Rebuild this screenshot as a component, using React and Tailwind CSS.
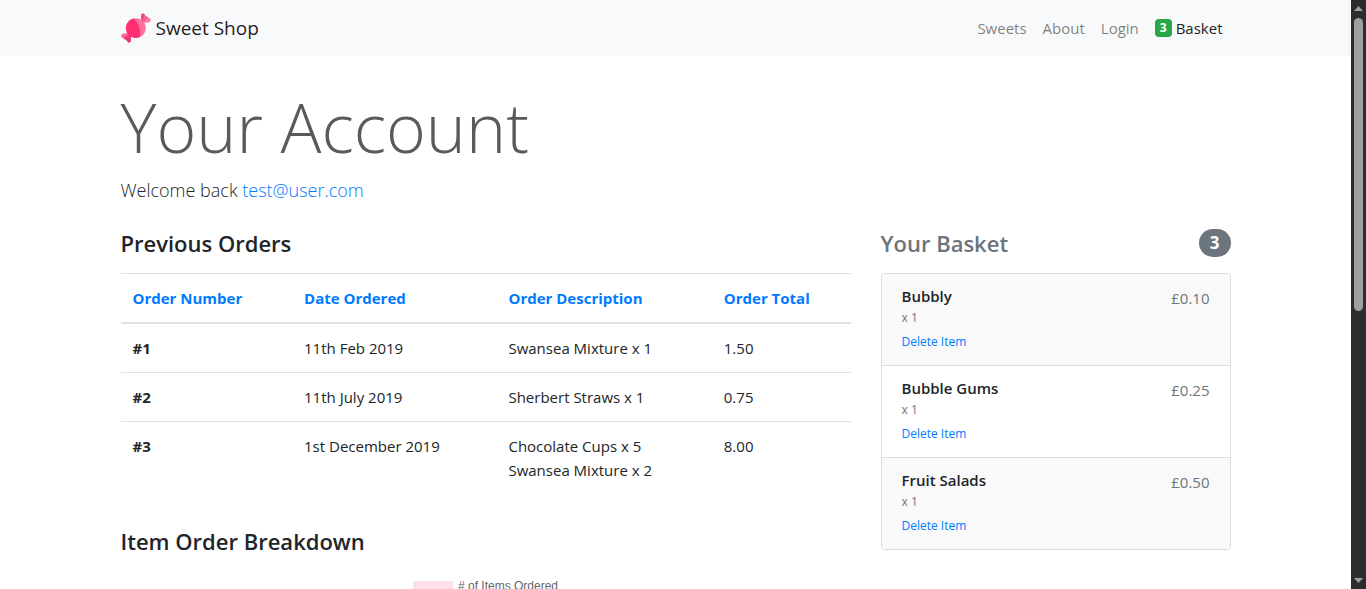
import React from "react";

const orders = [
  { id: "#1", date: "11th Feb 2019", items: ["Swansea Mixture x 1"], total: "1.50" },
  { id: "#2", date: "11th July 2019", items: ["Sherbert Straws x 1"], total: "0.75" },
  { id: "#3", date: "1st December 2019", items: ["Chocolate Cups x 5", "Swansea Mixture x 2"], total: "8.00" },
];

const basket = [
  { name: "Bubbly", price: "£0.10" },
  { name: "Bubble Gums", price: "£0.25" },
  { name: "Fruit Salads", price: "£0.50" },
];

function CandyLogo() {
  return (
    <svg className="size-[30px]" viewBox="0 0 30 30" aria-hidden="true">
      <path d="M20 10.4 L20.2 1.8 Q21.2 -0.4 23 0.8 Q24.2 3 26 3.8 Q29 4.8 29.8 6.6 Q30 8.8 28.2 9.2 Z" fill="#ff7aa2" />
      <path d="M20 10.4 L20.2 1.8 Q21.2 -0.4 23 0.8 L24 3 Z" fill="#f0467c" />
      <path d="M20 10.4 L24.8 3.2 L27.2 4.4 Z" fill="#f4598a" />
      <path d="M10 19.6 L9.8 28.2 Q8.8 30.4 7 29.2 Q5.8 27 4 26.2 Q1 25.2 0.2 23.4 Q0 21.2 1.8 20.8 Z" fill="#ff6594" />
      <path d="M10 19.6 L9.8 28.2 Q8.8 30.4 7 29.2 Q6 27.4 4.8 26.6 Z" fill="#e63a72" />
      <path d="M10 19.6 L5.2 26.8 L2.8 25.6 Z" fill="#f4346f" />
      <circle cx="15" cy="15" r="9.8" fill="#ff6f9b" />
      <path d="M12.8 5.5 A9.8 9.8 0 1 0 19 23.9 Q20.5 13.5 12.8 5.5 Z" fill="#ff3072" />
    </svg>
  );
}

function Navbar() {
  return (
    <nav className="bg-[#f8f9fa]">
      <div className="mx-auto flex h-14 max-w-[1140px] items-center justify-between px-[15px]">
        <a href="#home" className="flex items-center gap-[5px] text-[19px] leading-[30px] text-black/90">
          <CandyLogo />
          Sweet Shop
        </a>
        <ul className="flex gap-4 px-2 text-[15px] leading-6 text-black/50">
          <li><a href="#sweets">Sweets</a></li>
          <li><a href="#about">About</a></li>
          <li><a href="#login">Login</a></li>
          <li>
            <a href="#basket" className="flex items-center gap-1 text-black/90">
              <span className="rounded bg-[#28a745] px-[5px] py-[3px] text-xs leading-3 font-bold text-white">3</span>
              Basket
            </a>
          </li>
        </ul>
      </div>
    </nav>
  );
}

function OrdersTable() {
  return (
    <table className="w-full table-fixed border-collapse text-left text-[15px] leading-6">
      <colgroup>
        <col className="w-[23.5%]" />
        <col className="w-[28%]" />
        <col className="w-[29.5%]" />
        <col className="w-[19%]" />
      </colgroup>
      <thead>
        <tr className="border-t border-b-2 border-[#dee2e6] text-[#007bff]">
          {["Order Number", "Date Ordered", "Order Description", "Order Total"].map((label) => (
            <th key={label} scope="col" className="p-3 font-bold">
              <a href="#sort">{label}</a>
            </th>
          ))}
        </tr>
      </thead>
      <tbody>
        {orders.map((order) => (
          <tr key={order.id} className="border-t border-[#dee2e6] align-top">
            <th scope="row" className="p-3 font-bold">{order.id}</th>
            <td className="p-3">{order.date}</td>
            <td className="p-3">
              {order.items.map((item) => <div key={item}>{item}</div>)}
            </td>
            <td className="p-3">{order.total}</td>
          </tr>
        ))}
      </tbody>
    </table>
  );
}

function Basket() {
  return (
    <section>
      <h2 className="mb-4 flex items-center justify-between text-[22px] leading-7 font-semibold text-[#6c757d]">
        Your Basket
        <span className="rounded-full bg-[#6c757d] px-[11px] py-1 text-[17px] leading-5 font-bold text-white">3</span>
      </h2>
      <ul className="divide-y divide-[#dcdcdd] overflow-hidden rounded border border-[#dcdcdd]">
        {basket.map((item) => (
          <li key={item.name} className="flex justify-between px-5 pt-[13px] pb-[11px] odd:bg-[#f9f9f9]">
            <div>
              <h3 className="text-[15px] leading-[19px] font-semibold">{item.name}</h3>
              <p className="text-xs leading-6 text-[#6c757d]">x 1</p>
              <a href="#delete" className="block text-xs leading-6 text-[#007bff]">Delete Item</a>
            </div>
            <span className="text-[15px] leading-[22px] text-[#6c757d]">{item.price}</span>
          </li>
        ))}
      </ul>
    </section>
  );
}

function ScrollRail() {
  return (
    <div className="flex w-[15px] shrink-0 flex-col items-center justify-between bg-[#2c2c2c] py-1.5" aria-hidden="true">
      <svg className="h-[5px] w-[9px] shrink-0" viewBox="0 0 9 5"><path d="M4.5 0 L9 5 H0 Z" fill="#9f9f9f" /></svg>
      <div className="flex w-full grow justify-center py-[7px]">
        <div className="h-[53%] w-[9px] rounded-full bg-[#9f9f9f]" />
      </div>
      <svg className="h-[5px] w-[9px] shrink-0" viewBox="0 0 9 5"><path d="M0 0 H9 L4.5 5 Z" fill="#9f9f9f" /></svg>
    </div>
  );
}

export default function App() {
  return (
    <div className="flex h-screen overflow-hidden bg-white font-['Open_Sans','Noto_Sans',sans-serif] text-[#212529]">
      <div className="min-w-0 grow overflow-hidden">
        <Navbar />
        <main className="mx-auto max-w-[1140px] px-[15px]">
          <header className="pt-[27px] pb-6">
            <h1 className="text-[68px] leading-[88px] font-light text-[#5a5a5a]">Your Account</h1>
            <p className="mt-1 text-lg leading-[30px] font-light">
              Welcome back <a href="#account" className="text-[#007bff]">test@user.com</a>
            </p>
          </header>
          <div className="-mx-[15px] flex">
            <div className="w-2/3 px-[15px]">
              <h2 className="mb-4 text-[22px] leading-7 font-semibold">Previous Orders</h2>
              <OrdersTable />
              <h2 className="mt-[33px] mb-[26px] text-[22px] leading-7 font-semibold">Item Order Breakdown</h2>
              <div className="flex items-start justify-center gap-[5px] font-['Liberation_Sans',sans-serif] text-xs leading-[10px] text-[#666]">
                <span className="h-3 w-10 bg-[#ffe0e6]" />
                # of Items Ordered
              </div>
            </div>
            <div className="w-1/3 px-[15px]">
              <Basket />
            </div>
          </div>
        </main>
      </div>
      <ScrollRail />
    </div>
  );
}
